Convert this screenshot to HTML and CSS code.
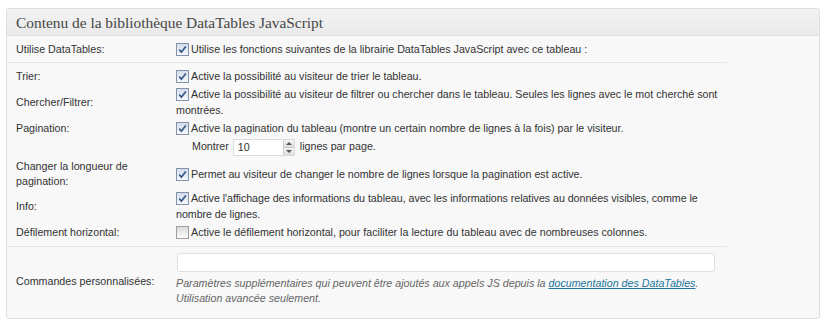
FILE: index.html
```html
<!DOCTYPE html>
<html lang="fr">
<head>
<meta charset="utf-8">
<title>DataTables</title>
<link rel="stylesheet" href="styles.css">
</head>
<body>
<div class="panel">
  <div class="panel-head">Contenu de la bibliothèque DataTables JavaScript</div>
  <table class="opts">
    <tr class="first">
      <th>Utilise DataTables:</th>
      <td><span class="cb on"><svg viewBox="0 0 11 11"><path d="M2.3 5.6 L4.4 8.2 L8.8 2.4"/></svg></span>Utilise les fonctions suivantes de la librairie DataTables JavaScript avec ce tableau :</td>
    </tr>
    <tr class="sp-top">
      <th>Trier:</th>
      <td><span class="cb on"><svg viewBox="0 0 11 11"><path d="M2.3 5.6 L4.4 8.2 L8.8 2.4"/></svg></span>Active la possibilité au visiteur de trier le tableau.</td>
    </tr>
    <tr>
      <th>Chercher/Filtrer:</th>
      <td><span class="cb on"><svg viewBox="0 0 11 11"><path d="M2.3 5.6 L4.4 8.2 L8.8 2.4"/></svg></span>Active la possibilité au visiteur de filtrer ou chercher dans le tableau. Seules les lignes avec le mot cherché sont montrées.</td>
    </tr>
    <tr>
      <th>Pagination:</th>
      <td><span class="cb on"><svg viewBox="0 0 11 11"><path d="M2.3 5.6 L4.4 8.2 L8.8 2.4"/></svg></span>Active la pagination du tableau (montre un certain nombre de lignes à la fois) par le visiteur.</td>
    </tr>
    <tr>
      <th></th>
      <td><div class="show">Montrer <span class="num"><span class="num-val">10</span><span class="spin"><span class="up"></span><span class="down"></span></span></span> lignes par page.</div></td>
    </tr>
    <tr class="two-line">
      <th>Changer la longueur de pagination:</th>
      <td><span class="cb on"><svg viewBox="0 0 11 11"><path d="M2.3 5.6 L4.4 8.2 L8.8 2.4"/></svg></span>Permet au visiteur de changer le nombre de lignes lorsque la pagination est active.</td>
    </tr>
    <tr class="info">
      <th>Info:</th>
      <td class="tight"><span class="cb on"><svg viewBox="0 0 11 11"><path d="M2.3 5.6 L4.4 8.2 L8.8 2.4"/></svg></span>Active l'affichage des informations du tableau, avec les informations relatives au données visibles, comme le nombre de lignes.</td>
    </tr>
    <tr class="sp-bottom">
      <th>Défilement horizontal:</th>
      <td><span class="cb"></span>Active le défilement horizontal, pour faciliter la lecture du tableau avec de nombreuses colonnes.</td>
    </tr>
    <tr class="last">
      <th>Commandes personnalisées:</th>
      <td>
        <div class="text-input"></div>
        <p class="desc">Paramètres supplémentaires qui peuvent être ajoutés aux appels JS depuis la <a href="#">documentation des DataTables</a>.<br>Utilisation avancée seulement.</p>
      </td>
    </tr>
  </table>
</div>
</body>
</html>
```

FILE: styles.css
```css
html, body {
  margin: 0;
  padding: 0;
  background: #fff;
}

body {
  font-family: "Liberation Sans", Arial, sans-serif;
  font-size: 10.7px;
  color: #333;
}

.panel {
  margin: 8px 8px 0 6px;
  border: 1px solid #dfdfdf;
  border-radius: 3px;
  background: #f8f8f8;
}

.panel-head {
  height: 26px;
  line-height: 28px;
  padding-left: 9px;
  font-family: "Liberation Serif", Georgia, serif;
  font-size: 15.4px;
  color: #464646;
  background: linear-gradient(#f3f3f3, #eaeaea);
  border-bottom: 1px solid #dfdfdf;
  border-radius: 3px 3px 0 0;
}

.opts {
  border-collapse: collapse;
  table-layout: fixed;
  width: 720px;
}

.opts th {
  width: 150px;
  padding: 1px 10px 1px 9px;
  text-align: left;
  font-weight: normal;
  vertical-align: middle;
  line-height: 16px;
}

.opts td {
  padding: 1px 1px 1px 0;
  line-height: 16px;
  vertical-align: middle;
}

.opts td.tight {
  letter-spacing: -0.05px;
}

.opts tr.first th,
.opts tr.first td {
  padding-top: 5px;
  padding-bottom: 5px;
  border-bottom: 1px solid #e6e6e6;
}

.opts tr.sp-top th,
.opts tr.sp-top td {
  padding-top: 5px;
}

.opts tr.two-line th,
.opts tr.two-line td {
  padding-top: 2px;
}

.opts tr.two-line th {
  line-height: 15px;
}

.opts tr.info th,
.opts tr.info td {
  padding-top: 0;
}

.opts tr.sp-bottom th,
.opts tr.sp-bottom td {
  padding-top: 1px;
  padding-bottom: 6px;
}

.opts tr.last th,
.opts tr.last td {
  border-top: 1px solid #e6e6e6;
  padding-top: 6px;
  padding-bottom: 12px;
}

.opts tr.last th {
  padding-top: 9px;
}

.cb {
  display: inline-block;
  box-sizing: border-box;
  width: 13px;
  height: 13px;
  margin-right: 2px;
  vertical-align: -3px;
  border: 1px solid #a0a0a0;
  background: linear-gradient(#dcdcdc, #fbfbfb);
}

.cb.on {
  border-color: #8593aa;
  background: linear-gradient(#d3dcea, #f6f8fb);
}

.cb svg {
  display: block;
  width: 11px;
  height: 11px;
}

.cb svg path {
  fill: none;
  stroke: #35578c;
  stroke-width: 1.7;
}

.show {
  padding-left: 16px;
}

.num {
  display: inline-flex;
  box-sizing: border-box;
  width: 62px;
  height: 17px;
  margin: 0 2px 0 1px;
  vertical-align: middle;
  border: 1px solid #dcdcdc;
  background: #fff;
}

.num-val {
  flex: 1;
  padding-left: 4px;
  line-height: 15px;
}

.spin {
  display: flex;
  flex-direction: column;
  width: 10px;
  border-left: 1px solid #cfcfcf;
}

.spin .up,
.spin .down {
  position: relative;
  flex: 1;
  background: linear-gradient(#f4f4f4, #dedede);
}

.spin .up {
  border-bottom: 1px solid #c9c9c9;
}

.spin .up::after,
.spin .down::after {
  content: "";
  position: absolute;
  left: 2px;
  top: 2px;
  border-left: 3px solid transparent;
  border-right: 3px solid transparent;
}

.spin .up::after {
  border-bottom: 3px solid #555;
}

.spin .down::after {
  border-top: 3px solid #555;
}

.text-input {
  box-sizing: border-box;
  width: 538px;
  height: 19px;
  margin: 0 0 4px 1px;
  border: 1px solid #dfdfdf;
  border-radius: 3px;
  background: #fff;
}

.desc {
  margin: 0;
  font-style: italic;
  color: #666;
  line-height: 15px;
}

.desc a {
  color: #21759b;
}
```
